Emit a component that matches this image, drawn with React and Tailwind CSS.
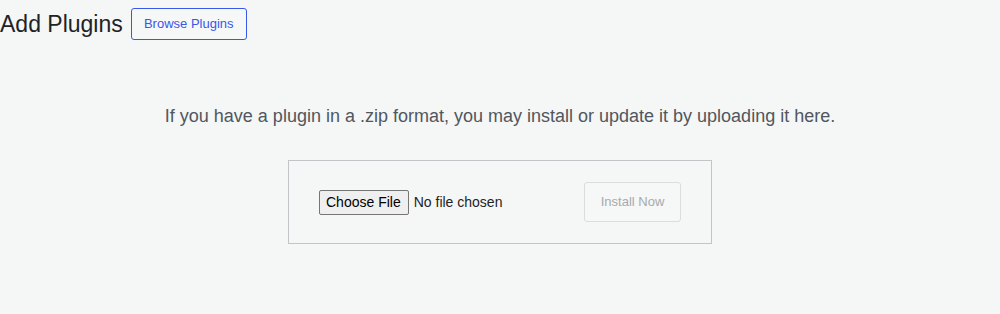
export default function App() {
  return (
    <div
      className="min-h-[314px] w-full bg-[#f5f6f6] text-[#1d2327]"
      style={{ fontFamily: '"Liberation Sans", Arial, sans-serif' }}
    >
      <div className="flex items-center pt-[8px]">
        <h1 className="text-[23px] font-normal leading-[30px]">Add Plugins</h1>
        <button className="ml-[8px] h-[32px] w-[116px] rounded-[3px] border border-[#3858e9] bg-[#f6f7f7] text-[13px] text-[#3858e9]">
          Browse Plugins
        </button>
      </div>

      <p className="mt-[64px] text-center text-[18px] leading-[24px] text-[#50575e]">
        If you have a plugin in a .zip format, you may install or update it by uploading it here.
      </p>

      <div className="mt-[32px] flex justify-center">
        <form className="flex h-[84px] w-[424px] items-center justify-between border border-[#c3c4c7] px-[30px]">
          <input
            type="file"
            className="w-[265px] text-[14px] text-[#1d2327] file:mr-[5px] file:rounded-[2px] file:border file:border-solid file:border-[#767676] file:bg-[#efefef] file:pl-[6px] file:pr-[7px] file:py-[1px] file:text-[14px] file:text-black"
          />
          <button
            type="button"
            disabled
            className="h-[40px] w-[97px] rounded-[3px] border border-[#dcdcde] bg-[#f6f7f7] text-[13px] text-[#a7aaad]"
          >
            Install Now
          </button>
        </form>
      </div>
    </div>
  );
}
